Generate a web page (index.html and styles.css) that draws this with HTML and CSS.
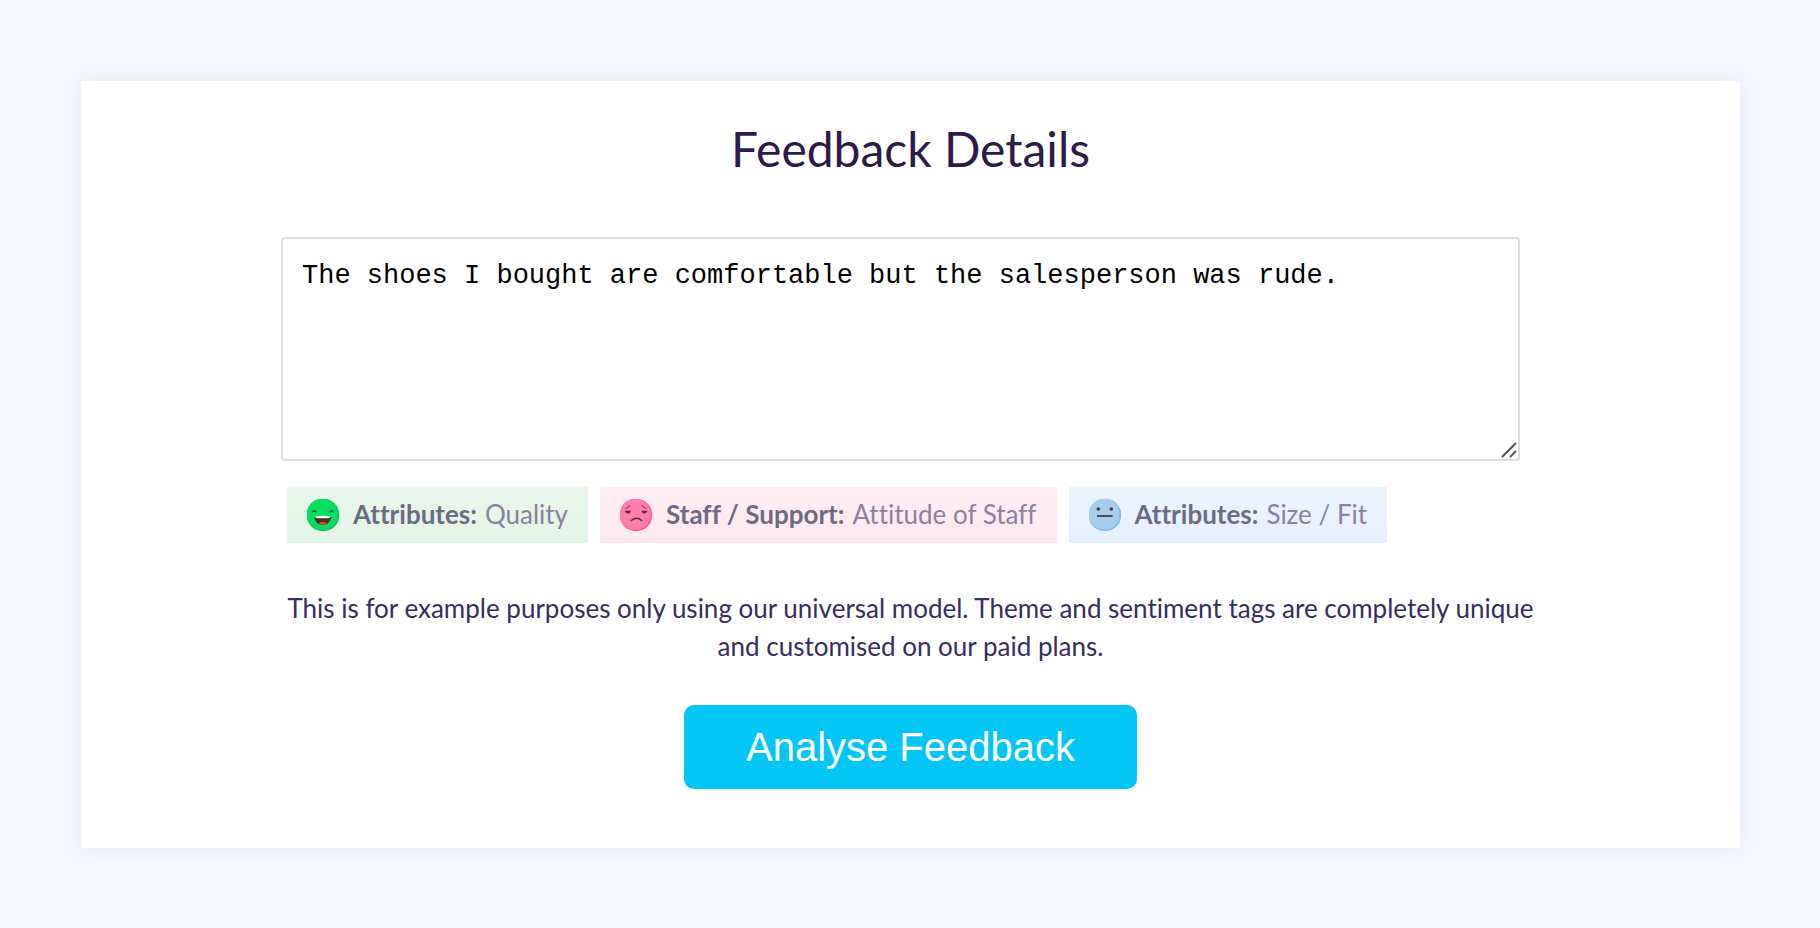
FILE: index.html
```html
<!DOCTYPE html>
<html lang="en">
<head>
<meta charset="utf-8">
<title>Feedback Details</title>
<link rel="stylesheet" href="styles.css">
</head>
<body>
<main class="card">
  <h1 class="title"><label for="feedback">Feedback Details</label></h1>
  <form class="form">
    <div class="field">
      <textarea class="input" id="feedback" spellcheck="false">The shoes I bought are comfortable but the salesperson was rude.</textarea>
      <svg class="grip" viewBox="0 0 16 16" aria-hidden="true"><path d="M1 15 15 1M9 15l6-6"/></svg>
    </div>
    <ul class="tags">
      <li class="tag positive">
        <svg class="face" viewBox="0 0 32 32" aria-hidden="true">
          <rect width="32" height="32" rx="15" fill="#05c853"/>
          <rect width="30.5" height="30.5" rx="14.5" fill="#04df62"/>
          <path d="M5.3 13.300q2-3 3.800 0M22.800 13.300q2-3 3.800 0" fill="none" stroke="#26522c" stroke-width="1.400"/>
          <path d="M7.300 18q8.500-1.500 17 0c-.5 4.500-4 8-8.500 8s-8-3.500-8.500-8z" fill="#45331f"/>
          <path d="M8 17.600q7.800-1.500 15.600 0-.3 1.600-2 1.600H10q-1.700 0-2-1.600z" fill="#fff"/>
          <path d="M11.500 24.300q4.300-2.500 8.600 0-1.800 1.700-4.300 1.700t-4.300-1.700z" fill="#f9401f"/>
        </svg>
        <strong class="theme">Attributes:</strong><span class="topic">Quality</span>
      </li>
      <li class="tag negative">
        <svg class="face" viewBox="0 0 32 32" aria-hidden="true">
          <rect width="32" height="32" rx="15" fill="#ff5798"/>
          <rect width="30.500" height="30.500" rx="14.500" fill="#ff7eae"/>
          <path d="M5.500 9.300q2.700-.3 4.300-3M22 6.300q1.600 2.700 4.300 3" fill="none" stroke="#a83562" stroke-width="1.200"/>
          <path d="M4.800 11.800h6q-.3 2.800-2.700 2.800T4.800 11.800zM21.500 11.800h6q-.8 2.800-3.200 2.800t-2.800-2.800z" fill="#572c2d"/>
          <path d="M11.300 21.500q5.200-4.500 10.400 0" fill="none" stroke="#51301f" stroke-width="1.500" stroke-linecap="round"/>
        </svg>
        <strong class="theme">Staff / Support:</strong><span class="topic">Attitude of Staff</span>
      </li>
      <li class="tag neutral">
        <svg class="face" viewBox="0 0 32 32" aria-hidden="true">
          <rect width="32" height="32" rx="15" fill="#80b9eb"/>
          <rect width="30.500" height="30.500" rx="14.500" fill="#a5cdf0"/>
          <circle cx="9.300" cy="10" r="1.800" fill="#443c32"/>
          <circle cx="22.300" cy="10" r="1.800" fill="#443c32"/>
          <path d="M8 17h15.600" stroke="#443c32" stroke-width="1.800"/>
        </svg>
        <strong class="theme">Attributes:</strong><span class="topic">Size / Fit</span>
      </li>
    </ul>
    <p class="note">This is for example purposes only using our universal model. Theme and sentiment tags are completely unique and customised on our paid plans.</p>
    <button class="submit" type="button">Analyse Feedback</button>
  </form>
</main>
</body>
</html>
```
FILE: styles.css
```css
* { box-sizing: border-box; }

body {
  margin: 0;
  padding: 81px 80px 80px 81px;
  background: #f7f8fd;
  font-family: Lato, "Open Sans", sans-serif;
  font-variant-ligatures: none;
}

.card {
  padding: 38px 200px 59px;
  background: #fff;
  box-shadow: 0 0 24px #dde8fb;
}

.title {
  margin: 0;
  color: #2d1a47;
  font-size: 48px;
  font-weight: 400;
  line-height: 60px;
  text-align: center;
}

.form {
  display: flex;
  flex-direction: column;
  align-items: center;
  margin-top: 58px;
}

.field {
  position: relative;
  align-self: stretch;
  margin-right: 20px;
}

.input {
  display: block;
  width: 100%;
  height: 224px;
  padding: 20px 19px;
  border: 2px solid #dcdcdc;
  border-radius: 4px;
  outline: 0;
  resize: none;
  background: #fff;
  color: #000;
  font: 27px/34px "Liberation Mono", "Courier New", monospace;
}

.grip {
  position: absolute;
  right: 3px;
  bottom: 3px;
  width: 16px;
  height: 16px;
  fill: none;
  stroke: #555;
  stroke-width: 2;
}

.tags {
  display: flex;
  flex-wrap: wrap;
  align-self: stretch;
  gap: 12px;
  margin: 26px 0 0;
  padding: 0 0 0 6px;
  list-style: none;
}

.tag {
  display: flex;
  align-items: center;
  height: 56px;
  padding: 0 20px 2px;
  font-size: 26px;
}

.positive { background: linear-gradient(#e8f7eb, #e3f5e7); }
.negative { background: linear-gradient(#ffeef4, #fee8f0); }
.neutral { background: linear-gradient(#ebf5ff, #e5f0fd); }

.face {
  width: 32px;
  height: 32px;
  margin: 2px 14px 0 0;
}

.theme {
  margin-right: 8px;
  color: #6b6b83;
  font-weight: 700;
}

.topic { color: #8b819f; }

.note {
  margin: 46px 0 0;
  color: #352d63;
  font-size: 26px;
  line-height: 38px;
  text-align: center;
}

.submit {
  height: 84px;
  margin-top: 40px;
  padding: 0 62px;
  border: 0;
  border-radius: 10px;
  background: #02c6f5;
  color: #fff;
  font: 40px "Liberation Sans", Arial, sans-serif;
}
```
